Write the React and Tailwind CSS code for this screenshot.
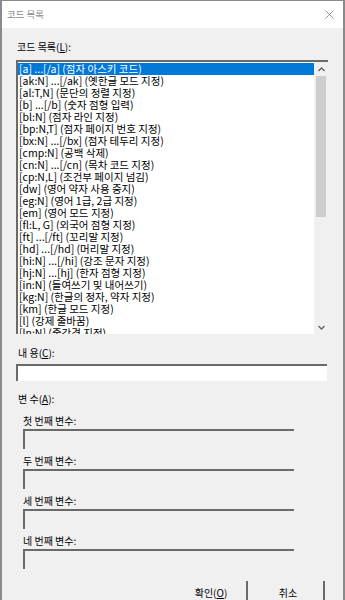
const items = [
  "[a] ...[/a] (점자 아스키 코드)",
  "[ak:N] ...[/ak] (옛한글 모드 지정)",
  "[al:T,N] (문단의 정렬 지정)",
  "[b] ...[/b] (숫자 점형 입력)",
  "[bl:N] (점자 라인 지정)",
  "[bp:N,T] (점자 페이지 번호 지정)",
  "[bx:N] ...[/bx] (점자 테두리 지정)",
  "[cmp:N] (공백 삭제)",
  "[cn:N] ...[/cn] (목차 코드 지정)",
  "[cp:N,L] (조건부 페이지 넘김)",
  "[dw] (영어 약자 사용 중지)",
  "[eg:N] (영어 1급, 2급 지정)",
  "[em] (영어 모드 지정)",
  "[fl:L, G] (외국어 점형 지정)",
  "[ft] ...[/ft] (꼬리말 지정)",
  "[hd] ...[/hd] (머리말 지정)",
  "[hi:N] ...[/hi] (강조 문자 지정)",
  "[hj:N] ...[hj] (한자 점형 지정)",
  "[in:N] (들여쓰기 및 내어쓰기)",
  "[kg:N] (한글의 정자, 약자 지정)",
  "[km] (한글 모드 지정)",
  "[l] (강제 줄바꿈)",
  "[ln:N] (줄간격 지정)",
];

const font = { fontFamily: '"Noto Sans CJK KR", "Noto Sans", sans-serif' };

function Label({ text, hot, rest }) {
  return (
    <div className="h-[12px] text-[10px] leading-[12px] text-black">
      {text}
      <span className="underline">{hot}</span>
      {rest}
    </div>
  );
}

function VarField({ label }) {
  return (
    <div className="mb-[6px]">
      <div className="h-[12px] text-[10px] leading-[12px] text-black">{label}</div>
      <div className="mt-[2px] h-[20px] w-[271px] border-l-2 border-t-2 border-[#6a6a6a] bg-[#f0f0f0]" />
    </div>
  );
}

export default function App() {
  return (
    <div
      className="flex h-[600px] w-[345px] flex-col overflow-hidden border-l-2 border-r-2 border-t border-[#8a8a8a] bg-[#f0f0f0]"
      style={font}
    >
      <div className="flex h-[27px] shrink-0 items-center justify-between bg-white pl-[5px] pr-[8px]">
        <span className="text-[9.5px] text-[#8c8c8c]">코드 목록</span>
        <svg width="9" height="9" viewBox="0 0 9 9" className="mr-[1px]">
          <path d="M0.5 0.5 L8.5 8.5 M8.5 0.5 L0.5 8.5" stroke="#8c8c8c" strokeWidth="0.9" />
        </svg>
      </div>

      <div className="flex flex-1 flex-col pl-[14px] pr-[15px]">
        <div className="mt-[13px] pl-[1px]">
          <Label text="코드 목록(" hot="L" rest="):" />
        </div>

        <div className="mt-[7px] flex h-[274px] w-[312px] shrink-0 border-l-2 border-t-2 border-[#6a6a6a] bg-white">
          <div className="flex-1 overflow-hidden pt-[1px]">
            {items.map((it, i) => (
              <div
                key={it}
                className={
                  i === 0
                    ? "h-[12px] whitespace-nowrap bg-[#0078d7] pl-[1px] text-[10.5px] leading-[12px] text-white"
                    : "h-[12px] whitespace-nowrap pl-[1px] text-[10.5px] leading-[12px] text-black"
                }
              >
                {it}
              </div>
            ))}
          </div>
          <div className="flex w-[14px] flex-col bg-[#f0f0f0]">
            <div className="flex h-[14px] items-center justify-center">
              <svg width="7" height="5" viewBox="0 0 7 5">
                <path d="M0.5 4 L3.5 1 L6.5 4" fill="none" stroke="#606060" strokeWidth="1.3" />
              </svg>
            </div>
            <div className="mx-[2px] h-[141px] bg-[#cdcdcd]" />
            <div className="flex-1" />
            <div className="flex h-[14px] items-center justify-center">
              <svg width="7" height="5" viewBox="0 0 7 5">
                <path d="M0.5 1 L3.5 4 L6.5 1" fill="none" stroke="#606060" strokeWidth="1.3" />
              </svg>
            </div>
          </div>
        </div>

        <div className="mt-[13px] pl-[2px]">
          <Label text="내 용(" hot="C" rest="):" />
        </div>
        <div className="mt-[5px] h-[17px] w-[311px] shrink-0 border-l-2 border-t-2 border-[#6a6a6a] bg-white" />

        <div className="mt-[12px] pl-[2px]">
          <Label text="변 수(" hot="A" rest="):" />
        </div>

        <div className="mt-[10px] pl-[7px]">
          <VarField label="첫 번째 변수:" />
          <VarField label="두 번째 변수:" />
          <VarField label="세 번째 변수:" />
          <VarField label="네 번째 변수:" />
        </div>

        <div className="mt-[6px] flex justify-end gap-[5px] pr-[3px]">
          <div className="flex h-[23px] w-[72px] shrink-0 items-center justify-center border-r-2 border-[#6a6a6a] text-[10px] text-black">
            확인(<span className="underline">O</span>)
          </div>
          <div className="flex h-[23px] w-[72px] shrink-0 items-center justify-center border-r-2 border-[#6a6a6a] text-[10px] text-black">
            취소
          </div>
        </div>
      </div>
    </div>
  );
}
